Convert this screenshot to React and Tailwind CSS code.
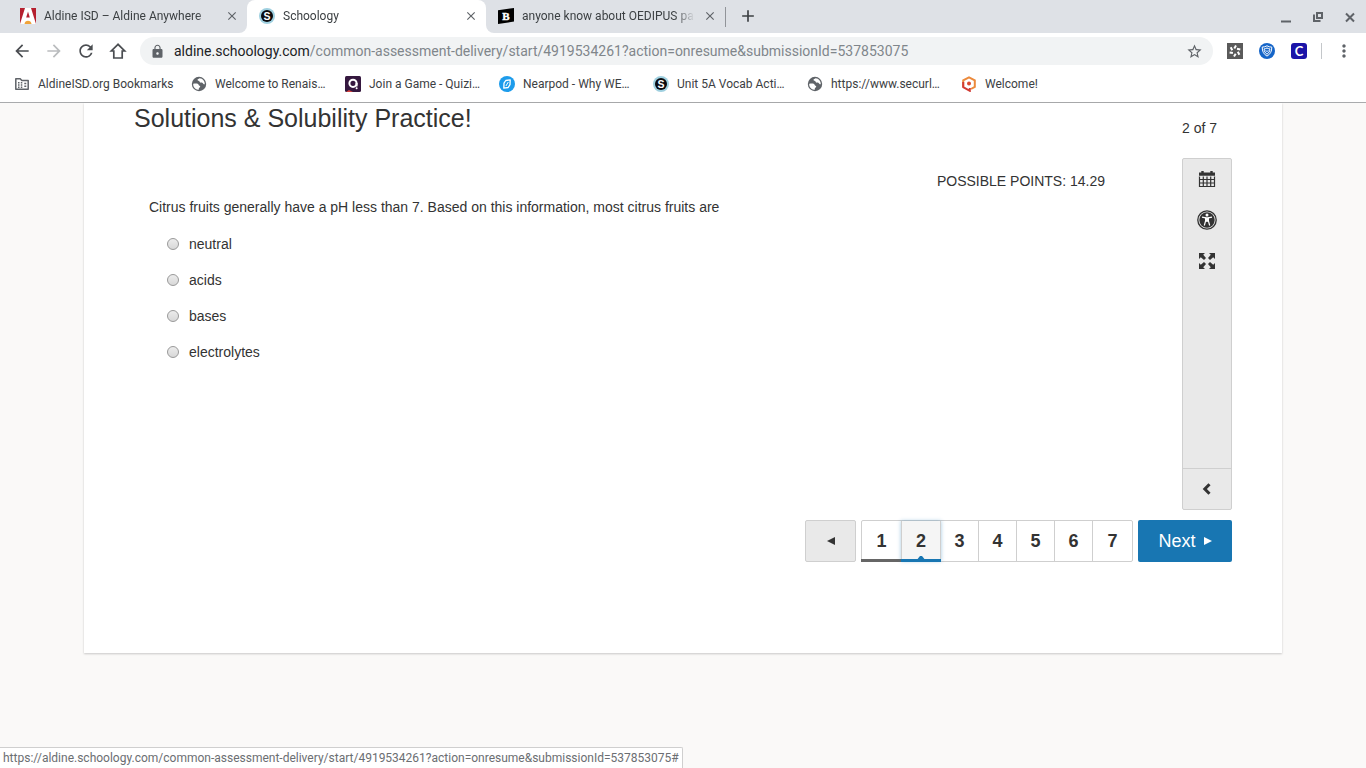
import React, { useState } from "react";
import {
  MdAdd,
  MdArrowBack,
  MdArrowForward,
  MdClose,
  MdLock,
  MdMoreVert,
  MdRefresh,
  MdStarBorder,
} from "react-icons/md";

const PATH = '/common-assessment-delivery/start/4919534261?action=onresume&submissionId=537853075';

const AldineIcon = () => (
  <svg className="w-4 h-4 shrink-0" viewBox="0 0 16 16">
    <rect width="16" height="16" fill="#b5202f" />
    <path d="M5 0h6l5 16H0z" fill="#fff" />
    <path d="M8 3.5l1.800 6H6.200z" fill="#b5202f" />
    <path d="M4.500 16c.3-2.200 1.600-3.200 3.500-3.200s3.200 1 3.500 3.200z" fill="#f0a33a" />
  </svg>
);

const SchoologyIcon = () => (
  <svg className="w-4 h-4 shrink-0" viewBox="0 0 16 16">
    <circle cx="8" cy="8" r="8" fill="#9fd0e0" />
    <circle cx="8" cy="8" r="6" fill="#0b0b0f" />
    <text x="8" y="11.800" textAnchor="middle" fontSize="10.500" fontWeight="700" fontFamily="Liberation Sans, sans-serif" fill="#fff">S</text>
  </svg>
);

const BartlebyIcon = () => (
  <svg className="w-4 h-4 shrink-0" viewBox="0 0 16 16">
    <path d="M0 2.200L16 0v13.600L0 16z" fill="#000" />
    <text x="8" y="12" textAnchor="middle" fontSize="11" fontWeight="700" fontFamily="Liberation Serif, serif" stroke="#fff" strokeWidth="0.400" fill="#fff">B</text>
  </svg>
);

const FolderIcon = () => (
  <svg className="w-4 h-4 shrink-0" viewBox="0 0 16 16" fill="none" stroke="#5f6368" strokeWidth="1.500">
    <path d="M1.800 13.200V2.800h4.400l1.600 1.800h6.400v8.600z" strokeLinejoin="round" />
    <path d="M4 6.800h1.500M4 9h1.500M4 11.200h1.500M6.800 6.800h1.500M6.800 9h1.500M6.800 11.200h1.500M10.300 7.500h2M10.300 10.300h2" />
  </svg>
);

const GlobeIcon = () => (
  <svg className="w-4 h-4 shrink-0" viewBox="0 0 16 16">
    <circle cx="8" cy="8" r="7.200" fill="#5f6368" />
    <path d="M2.200 7.800c1.800-.5 3.800-.6 4.800.1.900.7.500 1.500 1.600 1.800 1 .3.800 1.700-.3 2-.6.200-.3 1.200-.9 2.200C4 13.500 2 10.900 2.200 7.800z" fill="#fff" />
    <path d="M8.600 2.200c-1 .6-2.300.9-2.100 1.900.2.900 1.700.6 2 1.400.3.900.8 1.300 1.900 1.100 1.200-.2 1.400 1 2.100 1.500.4.300.9.200 1.300.1C13.800 5 11.900 2.500 8.600 2.200z" fill="#fff" />
  </svg>
);

const QuizizzIcon = () => (
  <svg className="w-4 h-4 shrink-0" viewBox="0 0 16 16">
    <rect width="16" height="16" rx="1.500" fill="#35183f" />
    <path d="M1 16l3-2 4 2z" fill="#d8433f" />
    <circle cx="8" cy="7.300" r="3.600" fill="none" stroke="#fff" strokeWidth="2" />
    <path d="M11.600 7v3.400" stroke="#fff" strokeWidth="2" />
    <circle cx="11.600" cy="12.300" r="1" fill="#fff" />
  </svg>
);

const NearpodIcon = () => (
  <svg className="w-4 h-4 shrink-0" viewBox="0 0 16 16">
    <circle cx="8" cy="8" r="8" fill="#1d9ceb" />
    <path d="M5 7.200L6.800 4.500 11.200 3.800 11 8.600 9.200 11.500 4.800 12.200z" fill="none" stroke="#fff" strokeWidth="1.300" strokeLinejoin="round" />
    <path d="M6.900 10l2.400-4" stroke="#fff" />
  </svg>
);

const WelcomeIcon = () => (
  <svg className="w-4 h-4 shrink-0" viewBox="0 0 16 16" fill="none">
    <path d="M2.200 11V4.300L8 1.300l5.800 3v6.500L10 13" stroke="#ec8a3c" strokeWidth="2" />
    <path d="M2.200 6v5.200l6.600 3.600V12" stroke="#d23b33" strokeWidth="2" />
    <circle cx="8" cy="7.500" r="2" fill="#d9482f" />
  </svg>
);

const TABS = [
  { title: 'Aldine ISD – Aldine Anywhere', icon: <AldineIcon />, strip: 'rounded-br-lg', tab: '' },
  { title: 'Schoology', icon: <SchoologyIcon />, strip: '', tab: 'bg-white rounded-t-lg' },
  { title: 'anyone know about OEDIPUS pa', icon: <BartlebyIcon />, strip: 'rounded-bl-lg', tab: '' },
];

const BOOKMARKS = [
  { title: 'AldineISD.org Bookmarks', icon: <FolderIcon />, width: 'min-w-[137px]' },
  { title: 'Welcome to Renais…', icon: <GlobeIcon />, width: 'min-w-[114px]' },
  { title: 'Join a Game - Quizi…', icon: <QuizizzIcon />, width: 'min-w-[114px]' },
  { title: 'Nearpod - Why WE…', icon: <NearpodIcon />, width: 'min-w-[114px]' },
  { title: 'Unit 5A Vocab Acti…', icon: <SchoologyIcon />, width: 'min-w-[114px]' },
  { title: 'https://www.securl…', icon: <GlobeIcon />, width: 'min-w-[114px]' },
  { title: 'Welcome!', icon: <WelcomeIcon />, width: '' },
];

const ANSWERS = ['neutral', 'acids', 'bases', 'electrolytes'];

const TabStrip = () => (
  <div className="flex h-[33px] bg-white text-xs text-[#3c4043]">
    <div className="w-2 bg-[#dee1e6]" />
    {TABS.map(({ title, icon, strip, tab }) => (
      <div key={title} className={`w-[239px] bg-[#dee1e6] ${strip}`}>
        <div className={`flex h-full items-center gap-2 pb-0.5 pl-3 pr-2 ${tab}`}>
          <button type="button" className="flex flex-1 items-center gap-2">
            {icon}
            <span className="flex-1 whitespace-nowrap text-left mask-r-from-88%">{title}</span>
          </button>
          <button type="button" aria-label="Close tab" className="text-[#5f6368]">
            <MdClose size={14} />
          </button>
        </div>
      </div>
    ))}
    <div className="flex flex-1 items-center bg-[#dee1e6] text-[#3c4043]">
      <div className="h-5 w-px bg-[#919499]" />
      <button type="button" aria-label="New tab" className="ml-3 pb-0.5"><MdAdd size={20} /></button>
      <div className="ml-auto flex gap-4 pr-2 text-[#5f6368]">
        <button type="button" aria-label="Minimize">
          <svg className="w-4 h-4" viewBox="0 0 16 16"><path d="M3 12.500h10" stroke="currentColor" strokeWidth="2" /></svg>
        </button>
        <button type="button" aria-label="Restore">
          <svg className="w-4 h-4" viewBox="0 0 16 16" fill="none" stroke="currentColor" strokeWidth="2">
            <path d="M7 4h5v5H7zM4 5.500V12h6.500" />
          </svg>
        </button>
        <button type="button" aria-label="Close">
          <svg className="w-4 h-4" viewBox="0 0 16 16"><path d="M4 4.500l8 8M12 4.500l-8 8" stroke="currentColor" strokeWidth="2" /></svg>
        </button>
      </div>
    </div>
  </div>
);

const Toolbar = () => (
  <div className="flex h-9 items-center bg-white text-[#5f6368]">
    <div className="flex gap-3 pl-3">
      <button type="button" aria-label="Back" className="text-[#4a4d51]"><MdArrowBack size={20} /></button>
      <button type="button" aria-label="Forward" className="text-[#babcbe]"><MdArrowForward size={20} /></button>
      <button type="button" aria-label="Reload" className="text-[#4a4d51]"><MdRefresh size={20} /></button>
      <button type="button" aria-label="Home" className="text-[#4a4d51]">
        <svg className="w-5 h-5" viewBox="0 0 20 20" fill="none" stroke="currentColor" strokeWidth="1.700">
          <path d="M10 3.300L3.300 10H5.800v7h8.400v-7h2.500z" />
        </svg>
      </button>
    </div>
    <div className="ml-3 flex h-7 flex-1 items-center rounded-full bg-[#f1f3f4] px-2.5 text-sm">
      <MdLock size={15} />
      <label htmlFor="address" className="ml-[9px] text-[#202124]">aldine.schoology.com</label>
      <input id="address" type="text" defaultValue={PATH} className="min-w-0 flex-1 bg-transparent text-[#80868b] outline-none" />
      <button type="button" aria-label="Bookmark this page"><MdStarBorder size={17} /></button>
    </div>
    <div className="flex items-center gap-4 pl-3.5 pr-3">
      <button type="button" aria-label="Extension">
        <svg className="w-4 h-4" viewBox="0 0 16 16">
          <rect width="16" height="16" fill="#5a5a5a" />
          <g stroke="#fff" strokeWidth="2" fill="none">
            <path d="M7.300 5.400L9 2.600M10 5.800l3.300.6M10.800 8.800l1.600 3M8.700 10.700L7 13.500M5.900 10l-3.300-.6M5.300 7.300L3.700 4.200" />
          </g>
        </svg>
      </button>
      <button type="button" aria-label="Shield extension">
        <svg className="w-4 h-4" viewBox="0 0 16 16" fill="none" stroke="#fff">
          <circle cx="8" cy="8" r="8" fill="#1565c8" stroke="none" />
          <path d="M8 2.800c1.500.9 3 1.300 4.800 1.300 0 4.200-1.300 7-4.800 9-3.500-2-4.800-4.800-4.800-9C5 4.100 6.500 3.700 8 2.800z" />
          <path d="M8 5c1 .500 1.900.8 2.900.9-.2 2.500-1 4-2.900 5.300C6.100 9.900 5.300 8.400 5.100 5.900 6.100 5.800 7 5.500 8 5z" />
          <path d="M6.700 7.300L8 8.700l1.300-1.400" />
        </svg>
      </button>
      <button type="button" aria-label="Clever extension">
        <svg className="w-4 h-4" viewBox="0 0 16 16">
          <rect width="16" height="16" rx="3" fill="#1b14a8" />
          <text x="8" y="12.500" textAnchor="middle" fontSize="13" fontWeight="700" fontFamily="Lato, sans-serif" fill="#fff">C</text>
        </svg>
      </button>
      <div className="-ml-0.5 h-4 w-px bg-[#c4c7ca]" />
      <button type="button" aria-label="Menu" className="-ml-1"><MdMoreVert size={20} /></button>
    </div>
  </div>
);

const BookmarkBar = () => (
  <nav className="flex h-[34px] items-center gap-4 border-b border-[#a9abad] bg-white pb-1 pl-3.5 text-xs text-[#3c4043]">
    {BOOKMARKS.map(({ title, icon, width }) => (
      <a key={title} href="#" className="flex items-center gap-2">
        {icon}
        <span className={`whitespace-nowrap ${width}`}>{title}</span>
      </a>
    ))}
  </nav>
);

const ToolPanel = () => (
  <aside className="flex h-[352px] w-[50px] flex-col items-center rounded-xs border border-[#cfcfcf] bg-[#e9e9e9] text-[#333]">
    <div className="flex flex-1 flex-col items-center gap-[21px] pt-2.5">
      <button type="button" aria-label="Calendar">
        <svg className="w-5 h-5" viewBox="0 0 20 20" fill="none" stroke="currentColor">
          <path d="M2 3.500h16v3.500H2z" fill="currentColor" stroke="none" />
          <path d="M5.500 2v3M14.500 2v3" strokeWidth="2.400" />
          <path d="M2.500 7v10.500h15V7M2.500 10.500h15M2.500 14h15M6.300 7v10.500M10 7v10.500M13.700 7v10.500" strokeWidth="1.200" />
          <path d="M2 7.200h16" stroke="#e9e9e9" strokeWidth="0.800" />
        </svg>
      </button>
      <button type="button" aria-label="Accessibility">
        <svg className="w-5 h-5" viewBox="0 0 20 20">
          <circle cx="10" cy="10" r="9.200" fill="none" stroke="currentColor" strokeWidth="1.300" />
          <circle cx="10" cy="10" r="7.700" fill="currentColor" />
          <circle cx="10" cy="5" r="1.500" fill="#fff" />
          <path d="M5 7.200l3.600.6v3.200L7.300 15.500M15 7.200l-3.600.6v3.200l1.300 4.500" fill="none" stroke="#fff" strokeWidth="1.200" />
          <path d="M8.200 7.300h3.600v4.500H8.200z" fill="#fff" />
        </svg>
      </button>
      <button type="button" aria-label="Full screen">
        <svg className="w-5 h-5" viewBox="0 0 20 20" fill="currentColor">
          <path d="M2 2h6L6.200 3.800l2.800 3.200-2 2-3.200-2.800L2 8zM18 2v6l-1.800-1.800L13 9l-2-2 2.800-3.200L12 2zM2 18v-6l1.800 1.800L7 11l2 2-2.800 3.200L8 18zM18 18h-6l1.800-1.800L11 13l2-2 3.200 2.800L18 12z" />
        </svg>
      </button>
    </div>
    <button type="button" aria-label="Collapse panel" className="flex h-[41px] w-full items-center justify-center border-t border-[#cfcfcf]">
      <svg className="w-4 h-4" viewBox="0 0 16 16"><path d="M10.500 3.200L5.800 8l4.700 4.800" fill="none" stroke="currentColor" strokeWidth="3" /></svg>
    </button>
  </aside>
);

const Pager = () => (
  <div className="flex h-[42px] justify-end gap-[5px] text-lg text-[#333]">
    <button type="button" aria-label="Previous" className="flex w-[51px] items-center justify-center rounded-xs border border-[#cfcfcf] bg-[#e9e9e9]">
      <svg className="w-2 h-2" viewBox="0 0 8 8"><path d="M8 0v8L0 4z" fill="currentColor" /></svg>
    </button>
    <div className="flex rounded-xs border border-[#cfcfcf] font-bold">
      <button type="button" className="relative w-[39px]">
        1
        <span className="absolute -bottom-px -left-px right-0 h-[3px] bg-[#666]" />
      </button>
      <button type="button" className="relative w-10 border-x border-[#cfcfcf] bg-[#f5f5f5] shadow-[0_0_4px_rgba(24,118,178,0.4)]">
        2
        <svg className="absolute bottom-0 left-[14px] h-1.5 w-2.5" viewBox="0 0 10 6"><path d="M0 6l4-5h2l4 5z" fill="#1876b2" /></svg>
        <span className="absolute -bottom-px -left-px -right-px h-[3px] bg-[#1876b2]" />
      </button>
      {[3, 4, 5, 6].map(n => (
        <button key={n} type="button" className="w-[38px] border-r border-[#cfcfcf]">{n}</button>
      ))}
      <button type="button" className="w-[39px]">7</button>
    </div>
    <button type="button" className="flex w-[94px] items-center justify-center gap-2 rounded-xs bg-[#1876b2] text-white">
      Next
      <svg className="w-2 h-2" viewBox="0 0 8 8"><path d="M0 0l8 4-8 4z" fill="currentColor" /></svg>
    </button>
  </div>
);

const App = () => {
  const [answer, setAnswer] = useState('');

  return (
    <div className="min-h-screen bg-[#faf9f8] font-['Liberation_Sans',sans-serif] text-sm text-[#333]">
      <header className="font-[Roboto,sans-serif]">
        <TabStrip />
        <Toolbar />
        <BookmarkBar />
      </header>

      <main className="mx-[84px] bg-white px-[50px] pb-[91px] shadow-[0_1px_2px_rgba(0,0,0,0.2)]">
        <div className="flex h-[55px] justify-between">
          <h1 className="text-[25px] leading-[30px]">Solutions &amp; Solubility Practice!</h1>
          <p className="pr-[15px] pt-[15px]">2 of 7</p>
        </div>
        <div className="flex">
          <form className="flex-1 pl-[15px] pt-3">
            <p className="pr-[77px] text-right leading-[22px]">POSSIBLE POINTS: 14.29</p>
            <fieldset>
              <legend className="pt-1 leading-[22px]">
                Citrus fruits generally have a pH less than 7. Based on this information, most citrus fruits are
              </legend>
              <div className="pl-[18px] pt-2">
                {ANSWERS.map(name => (
                  <div key={name} className="flex h-9 items-center gap-2.5">
                    <input
                      className="h-3 w-3 appearance-none rounded-full border border-[#999] bg-linear-to-b from-[#ececec] to-[#d8d8d8] checked:bg-[#333]"
                      id={name}
                      type="radio"
                      name="answer"
                      checked={answer === name}
                      onChange={() => setAnswer(name)}
                    />
                    <label htmlFor={name}>{name}</label>
                  </div>
                ))}
              </div>
            </fieldset>
          </form>
          <ToolPanel />
        </div>
        <div className="pt-2.5">
          <Pager />
        </div>
      </main>

      <div className="fixed bottom-0 left-0 h-[21px] rounded-tr-xs border-r border-t border-[#cfcfcf] bg-white px-[3px] font-[Roboto,sans-serif] text-xs leading-5 text-[#6b6e72]">
        https://aldine.schoology.com{PATH}#
      </div>
    </div>
  );
};

export default App;
